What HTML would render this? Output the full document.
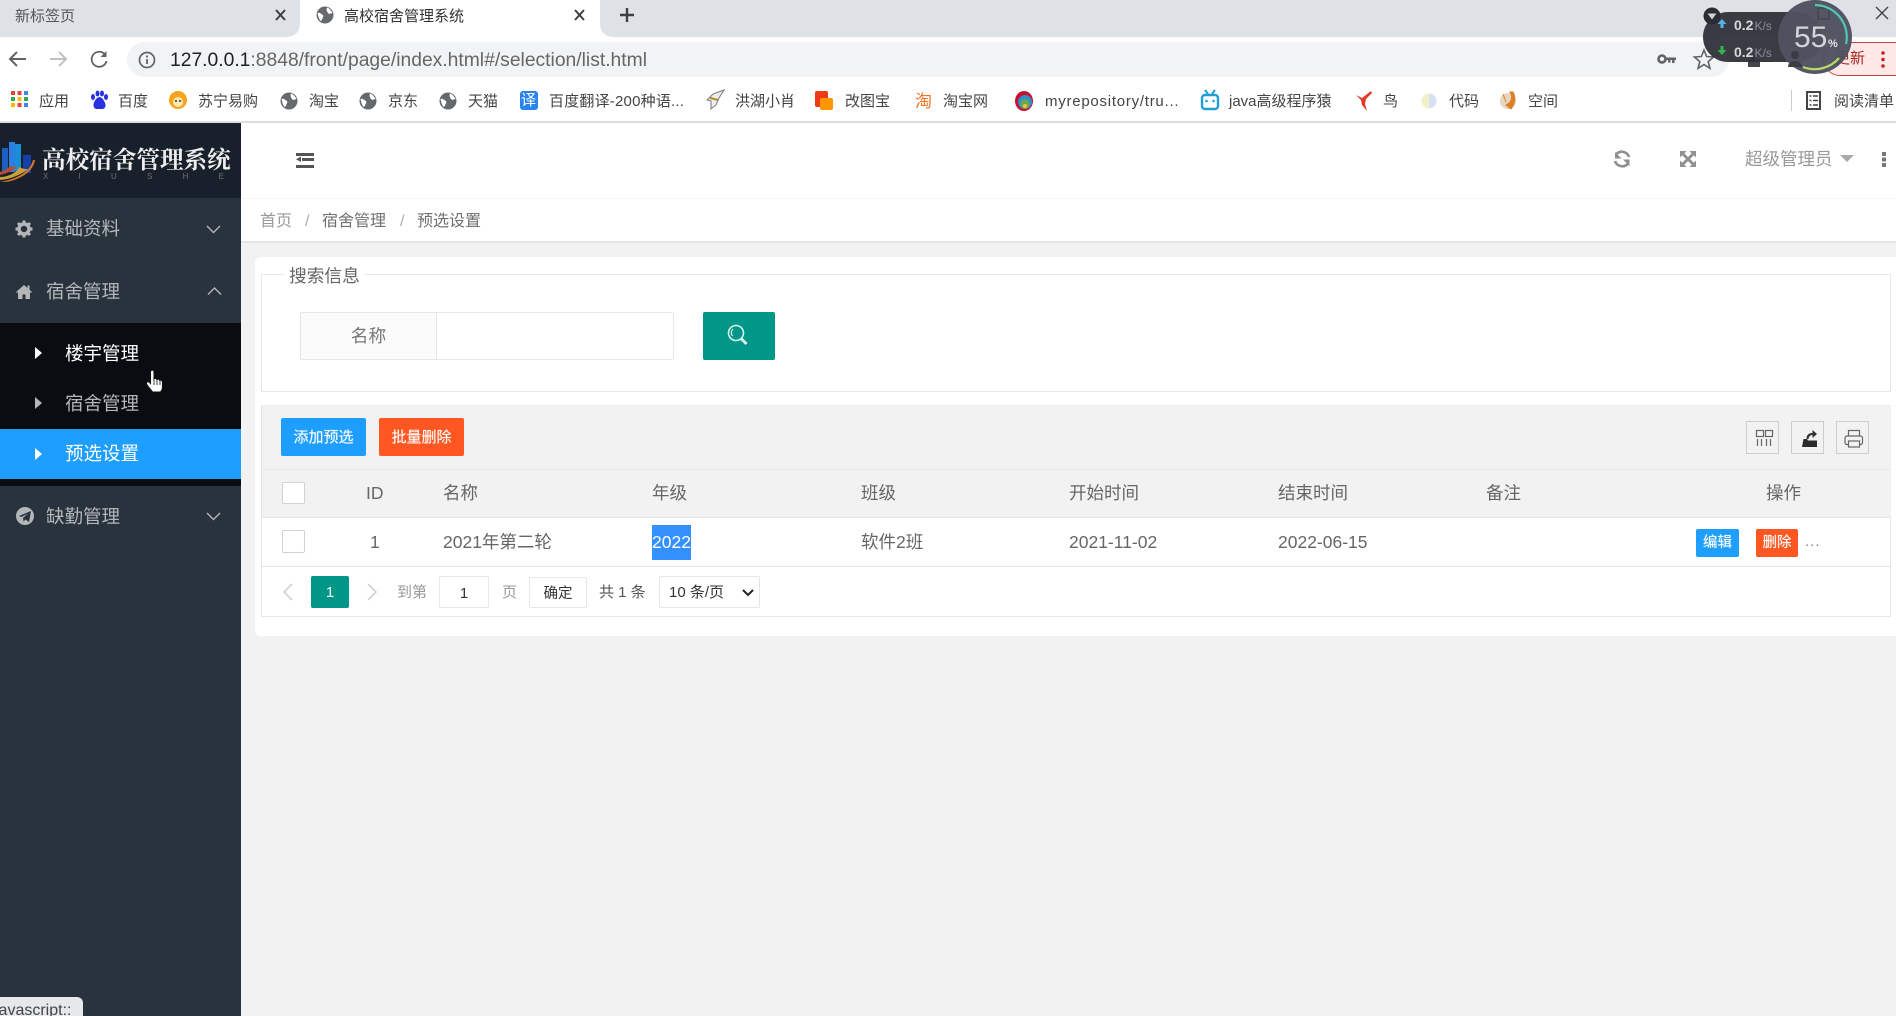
<!DOCTYPE html>
<html lang="zh"><head><meta charset="utf-8"><title>高校宿舍管理系统</title>
<style>
*{box-sizing:border-box}
html,body{margin:0;padding:0;width:1896px;height:1016px;overflow:hidden;background:#f2f2f2;font-family:"Liberation Sans","Noto Sans CJK SC",sans-serif}
.a{position:absolute}
.t{position:absolute;white-space:nowrap;line-height:24px;height:24px}
.bm{font-size:15px;color:#444}
.sb{font-size:18.5px;color:#b4b7ba}
.th{font-size:17.5px;color:#666}
.btn{position:absolute;color:#fff;text-align:center;border-radius:2px;text-shadow:0 0 1px rgba(255,255,255,.55)}
</style></head><body>
<!-- browser chrome -->
<div class="a" style="left:0;top:0;width:1896px;height:37px;background:#dee1e6"></div>
<div class="a" style="left:0;top:37px;width:1896px;height:85px;background:#fff"></div>
<div class="a" style="left:300px;top:0;width:300px;height:37px;background:#fff"></div>
<div class="a" style="left:288px;top:25px;width:12px;height:12px;background:radial-gradient(circle at 0 0,#dee1e6 11.5px,#fff 12px)"></div>
<div class="a" style="left:600px;top:25px;width:12px;height:12px;background:radial-gradient(circle at 100% 0,#dee1e6 11.5px,#fff 12px)"></div>
<div class="t" style="left:15px;top:5px;font-size:15px;color:#555">新标签页</div>
<div class="t" style="left:344px;top:5px;font-size:15px;color:#333">高校宿舍管理系统</div>
<div class="a" style="left:127px;top:42px;width:1602px;height:35px;background:#f1f3f4;border-radius:18px"></div>
<div class="t" style="left:170px;top:49px;font-size:19.3px;color:#666"><span style="color:#202124">127.0.0.1</span>:8848/front/page/index.html#/selection/list.html</div>
<div class="a" style="left:0;top:121px;width:1896px;height:2px;background:#dcdcdc"></div>
<div class="t bm" style="left:39px;top:90px">应用</div>
<div class="t bm" style="left:118px;top:90px">百度</div>
<div class="t bm" style="left:198px;top:90px">苏宁易购</div>
<div class="t bm" style="left:309px;top:90px">淘宝</div>
<div class="t bm" style="left:388px;top:90px">京东</div>
<div class="t bm" style="left:468px;top:90px">天猫</div>
<div class="t bm" style="left:549px;top:90px;letter-spacing:.2px">百度翻译-200种语...</div>
<div class="t bm" style="left:735px;top:90px">洪湖小肖</div>
<div class="t bm" style="left:845px;top:90px">改图宝</div>
<div class="t bm" style="left:943px;top:90px">淘宝网</div>
<div class="t bm" style="left:1045px;top:90px;letter-spacing:.75px">myrepository/tru...</div>
<div class="t bm" style="left:1229px;top:90px">java高级程序猿</div>
<div class="t bm" style="left:1383px;top:90px">鸟</div>
<div class="t bm" style="left:1449px;top:90px">代码</div>
<div class="t bm" style="left:1528px;top:90px">空间</div>
<div class="t bm" style="left:1834px;top:90px">阅读清单</div>
<div class="a" style="left:1791px;top:90px;width:1px;height:21px;background:#ccc"></div>
<div class="t" style="left:915px;top:90px;font-size:17px;color:#f4711f">淘</div>
<div class="a" style="left:520px;top:91px;width:18px;height:19px;background:#2a83ee;border-radius:3px"></div>
<div class="t" style="left:521px;top:89px;font-size:15px;color:#fff">译</div>
<!-- update pill -->
<div class="a" style="left:1823px;top:42px;width:100px;height:34px;background:#fce8e6;border:1.3px solid #c5403a;border-radius:17px"></div>
<div class="t" style="left:1835px;top:47px;font-size:15px;color:#a8261e">更新</div>
<!-- sidebar -->
<div class="a" style="left:0;top:123px;width:241px;height:893px;background:#28333e"></div>
<div class="a" style="left:0;top:123px;width:241px;height:75px;background:#18212b"></div>
<div class="t" style="left:42px;top:144px;font:700 23.6px/28px 'Noto Serif CJK SC','Liberation Serif',serif;color:#eee;height:28px">高校宿舍管理系统</div>
<div class="t" style="left:43px;top:165px;font-size:8px;color:#6a7077;word-spacing:28px">X I U S H E</div>
<div class="t sb" style="left:46px;top:217px">基础资料</div>
<div class="t sb" style="left:46px;top:280px">宿舍管理</div>
<div class="a" style="left:0;top:323px;width:241px;height:163px;background:#090c10"></div>
<div class="t sb" style="left:65px;top:342px;color:#fff">楼宇管理</div>
<div class="t sb" style="left:65px;top:392px">宿舍管理</div>
<div class="a" style="left:0;top:429px;width:241px;height:50px;background:#1e9fff"></div>
<div class="t sb" style="left:65px;top:442px;color:#fff">预选设置</div>
<div class="t sb" style="left:46px;top:505px">缺勤管理</div>
<!-- header -->
<div class="a" style="left:241px;top:123px;width:1655px;height:76px;background:#fff;border-bottom:1px solid #f6f6f6"></div>
<div class="t" style="left:1745px;top:147px;font-size:17.5px;color:#999">超级管理员</div>
<div class="a" style="left:241px;top:199px;width:1655px;height:44px;background:#fff;border-bottom:2px solid #e4e4e4"></div>
<div class="t" style="left:260px;top:210px;font-size:16px;color:#999">首页</div>
<div class="t" style="left:305px;top:210px;font-size:16px;color:#aaa">/</div>
<div class="t" style="left:322px;top:210px;font-size:16px;color:#707070">宿舍管理</div>
<div class="t" style="left:400px;top:210px;font-size:16px;color:#aaa">/</div>
<div class="t" style="left:417px;top:210px;font-size:16px;color:#707070">预选设置</div>
<!-- card -->
<div class="a" style="left:255px;top:257px;width:1660px;height:379px;background:#fff;border-radius:5px"></div>
<div class="a" style="left:261px;top:274px;width:1630px;height:118px;border:1px solid #e6e6e6"></div>
<div class="t" style="left:284px;top:264px;padding:0 5px;font-size:17.7px;color:#666;background:#fff">搜索信息</div>
<div class="a" style="left:300px;top:312px;width:374px;height:48px;border:1px solid #e6e6e6;border-radius:2px"></div>
<div class="a" style="left:300px;top:312px;width:137px;height:48px;border:1px solid #e6e6e6;background:#fbfbfb;border-radius:2px 0 0 2px"></div>
<div class="t" style="left:300px;top:324px;width:137px;text-align:center;font-size:17.7px;color:#777">名称</div>
<div class="a" style="left:703px;top:312px;width:72px;height:48px;background:#009688;border-radius:2px"></div>
<!-- table -->
<div class="a" style="left:261px;top:405px;width:1630px;height:212px;border:1px solid #e6e6e6;border-top-color:#eee"></div>
<div class="a" style="left:262px;top:406px;width:1629px;height:112px;background:#f2f2f2"></div>
<div class="a" style="left:262px;top:469px;width:1629px;height:1px;background:#e8e8e8"></div>
<div class="a" style="left:262px;top:517px;width:1629px;height:1px;background:#e4e4e4"></div>
<div class="a" style="left:262px;top:566px;width:1629px;height:1px;background:#e4e4e4"></div>
<div class="btn" style="left:281px;top:418px;width:85px;height:38px;background:#1e9fff;font-size:15px;line-height:40px">添加预选</div>
<div class="btn" style="left:379px;top:418px;width:85px;height:38px;background:#ff5722;font-size:15px;line-height:40px">批量删除</div>
<div class="a" style="left:1746px;top:421px;width:33px;height:33px;border:1px solid #ccc"></div>
<div class="a" style="left:1791px;top:421px;width:33px;height:33px;border:1px solid #ccc"></div>
<div class="a" style="left:1836px;top:421px;width:33px;height:33px;border:1px solid #ccc"></div>
<div class="a" style="left:282px;top:482px;width:23px;height:22px;background:#fff;border:1px solid #d2d2d2;border-radius:2px"></div>
<div class="a" style="left:282px;top:530px;width:23px;height:23px;background:#fff;border:1px solid #d2d2d2;border-radius:2px"></div>
<div class="t th" style="left:366px;top:481px">ID</div>
<div class="t th" style="left:443px;top:481px">名称</div>
<div class="t th" style="left:652px;top:481px">年级</div>
<div class="t th" style="left:861px;top:481px">班级</div>
<div class="t th" style="left:1069px;top:481px">开始时间</div>
<div class="t th" style="left:1278px;top:481px">结束时间</div>
<div class="t th" style="left:1486px;top:481px">备注</div>
<div class="t th" style="left:1766px;top:481px">操作</div>
<div class="t th" style="left:370px;top:530px">1</div>
<div class="t th" style="left:443px;top:530px">2021年第二轮</div>
<div class="a" style="left:652px;top:525px;width:39px;height:35px;background:#3390ff"></div>
<div class="t th" style="left:652px;top:530px;color:#fff">2022</div>
<div class="t th" style="left:861px;top:530px">软件2班</div>
<div class="t th" style="left:1069px;top:530px">2021-11-02</div>
<div class="t th" style="left:1278px;top:530px">2022-06-15</div>
<div class="btn" style="left:1696px;top:529px;width:43px;height:28px;background:#1e9fff;font-size:14.5px;line-height:29px">编辑</div>
<div class="btn" style="left:1756px;top:529px;width:42px;height:28px;background:#ff5722;font-size:14.5px;line-height:29px">删除</div>
<div class="t" style="left:1805px;top:530px;font-size:15px;color:#888;letter-spacing:1px">...</div>
<!-- pager -->
<div class="btn" style="left:311px;top:576px;width:38px;height:32px;background:#009688;font-size:15px;line-height:34px;text-shadow:none">1</div>
<div class="t" style="left:397px;top:581px;font-size:15px;color:#999">到第</div>
<div class="a" style="left:439px;top:576px;width:50px;height:32px;border:1px solid #e6e6e6;border-radius:2px;background:#fff;text-align:center;font-size:15px;line-height:33px;color:#333">1</div>
<div class="t" style="left:502px;top:581px;font-size:15px;color:#999">页</div>
<div class="a" style="left:529px;top:577px;width:58px;height:31px;border:1px solid #e6e6e6;border-radius:2px;background:#fff;text-align:center;font-size:14.5px;line-height:32px;color:#333">确定</div>
<div class="t" style="left:599px;top:581px;font-size:15px;color:#555">共 1 条</div>
<div class="a" style="left:659px;top:576px;width:101px;height:32px;border:1px solid #e6e6e6;border-radius:2px;background:#fff"></div>
<div class="t" style="left:669px;top:581px;font-size:15px;color:#333">10 条/页</div>
<!-- status bubble -->
<div class="a" style="left:0;top:997px;width:83px;height:19px;background:#e6e8eb;border-top-right-radius:6px;overflow:hidden"><span style="position:absolute;left:-5px;top:3px;font-size:16px;line-height:22px;color:#444;white-space:nowrap">javascript::</span></div>

<svg class="a" style="left:0;top:0" width="1896" height="1016" viewBox="0 0 1896 1016">
<defs>
<g id="globe"><circle r="8.5" fill="#666a6e"/><path d="M-7.5-2C-5-3-4-1-2 0-1 2-3 3-3 5L-4.500 6C-6 4-7 1-7.500-2zM2-7.500C4-7 6-5 7.500-2L4-1C2-3 1-5 2-7.500z" fill="#fff"/></g>
</defs>
<!-- tab controls -->
<path d="M276 10l9 10M285 10l-9 10M575 10l9 10M584 10l-9 10" stroke="#3c4043" stroke-width="2"/>
<path d="M627 8v14M620 15h14" stroke="#3c4043" stroke-width="2.4"/>
<use href="#globe" x="325" y="15"/>
<!-- nav -->
<path d="M26 59H11M17 52l-7 7 7 7" fill="none" stroke="#5f6368" stroke-width="2"/>
<path d="M50 59h15M59 52l7 7-7 7" fill="none" stroke="#bdc1c6" stroke-width="2"/>
<path d="M105 54.500a7.500 7.500 0 1 0 1.500 6.500" fill="none" stroke="#5f6368" stroke-width="1.800"/>
<path d="M106.500 51v6h-6z" fill="#5f6368"/>
<circle cx="147" cy="60" r="7.500" fill="none" stroke="#5f6368" stroke-width="1.700"/>
<path d="M147 59v5M147 55.500v2" stroke="#5f6368" stroke-width="1.800"/>
<!-- omnibox right -->
<circle cx="1662" cy="59" r="3.500" fill="none" stroke="#5f6368" stroke-width="2.600"/>
<path d="M1666 57.500h10v2.500h-1.500v3h-2.500v-3h-1.500v2.500h-2.500v-2.500h-2z" fill="#5f6368"/>
<path d="M1704 50l2.600 6.500 7 .5-5.400 4.500 1.700 6.800-5.900-3.700-5.900 3.700 1.700-6.800-5.400-4.500 7-.5z" fill="none" stroke="#5f6368" stroke-width="1.600"/>
<path d="M1748 60h3v-2a2 2 0 0 1 4 0v2h5v7h-12z" fill="#44464c"/>
<circle cx="1883" cy="53" r="1.800" fill="#c5221f"/><circle cx="1883" cy="59.500" r="1.800" fill="#c5221f"/><circle cx="1883" cy="66" r="1.800" fill="#c5221f"/>
<!-- bookmarks -->
<g>
<rect x="11" y="91" width="4" height="4" fill="#ea4335"/><rect x="17.500" y="91" width="4" height="4" fill="#ea4335"/><rect x="24" y="91" width="4" height="4" fill="#4285f4"/>
<rect x="11" y="97" width="4" height="4" fill="#34a853"/><rect x="17.500" y="97" width="4" height="4" fill="#fbbc05"/><rect x="24" y="97" width="4" height="4" fill="#34a853"/>
<rect x="11" y="103" width="4" height="4" fill="#fbbc05"/><rect x="17.500" y="103" width="4" height="4" fill="#ea4335"/><rect x="24" y="103" width="4" height="4" fill="#4285f4"/>
<g fill="#2932e1"><ellipse cx="93" cy="97" rx="2" ry="3"/><ellipse cx="97.500" cy="93.500" rx="2" ry="3"/><ellipse cx="102" cy="93.500" rx="2" ry="3"/><ellipse cx="106" cy="97" rx="2" ry="3"/><path d="M99.500 97c-3 0-6 5-6 8s2 4 3 4h6c2 0 3-2 3-4s-3-8-6-8z"/></g>
<circle cx="178" cy="100" r="9" fill="#f3a51d"/><circle cx="178" cy="102" r="5" fill="#ffe9b0"/><circle cx="176" cy="101" r="1" fill="#333"/><circle cx="180" cy="101" r="1" fill="#333"/>
<use href="#globe" x="289" y="101"/><use href="#globe" x="368" y="101"/><use href="#globe" x="448" y="101"/>
<path d="M724 90l-11 4-6 6 4 1 0 8 5-4 3-7z" fill="#eee" stroke="#777"/><path d="M710 98l8 2" stroke="#a8922e" stroke-width="2"/>
<rect x="815" y="91" width="13" height="16" rx="2" fill="#f03a17"/><rect x="820" y="98" width="13" height="12" rx="2" fill="#ff9800"/>
<ellipse cx="1024" cy="101" rx="9" ry="10" fill="#c8102e"/><ellipse cx="1025" cy="102" rx="7" ry="7" fill="#2f8fd0"/><ellipse cx="1025" cy="104" rx="4.500" ry="5" fill="#6aa84f"/><circle cx="1025" cy="106" r="2" fill="#f1c232"/>
<rect x="1202" y="95" width="16" height="14" rx="3" fill="#fff" stroke="#1f9fd8" stroke-width="2.400"/><path d="M1205 90l3 4M1215 90l-3 4" stroke="#1f9fd8" stroke-width="2"/><circle cx="1206.500" cy="101" r="1.300" fill="#1f9fd8"/><circle cx="1213.500" cy="101" r="1.300" fill="#1f9fd8"/>
<path d="M1356 95l6 3 9-7 1 2-6 6-1 5 2 7-5-6-1-5z" fill="#e2382b"/>
<circle cx="1429" cy="101" r="7.500" fill="#f3efc8"/><path d="M1429 93.500a7.500 7.500 0 0 1 0 15z" fill="#d6e2f3"/>
<circle cx="1508" cy="101" r="8" fill="#e7d5bf"/><path d="M1510 92c3 5 2 10-4 13l5 4c4-5 5-12 2-17zM1503 94l3 8" fill="#dc7f25" stroke="#dc7f25"/>
<rect x="1807" y="92" width="13" height="17" fill="none" stroke="#444" stroke-width="2"/><path d="M1809.500 96h2M1813 96h5M1809.500 100.500h2M1813 100.500h5M1809.500 105h2M1813 105h5" stroke="#444" stroke-width="1.500"/>
</g>
<!-- logo -->
<g>
<rect x="2" y="148" width="6" height="24" fill="#1e5fc0"/><rect x="9" y="142" width="6" height="30" fill="#2a7fe0"/><rect x="15" y="144" width="6" height="27" fill="#1a8fd8"/><rect x="23" y="155" width="8" height="18" fill="#1540a8"/>
<path d="M35 160c-2 12-14 18-24 21-4 1-8 1-11 1 12-2 30-8 33-22z" fill="#d8772a"/>
<path d="M0 177c8 0 16-4 20-10 2 2 5 2 8 2-6 5-16 10-28 11z" fill="#c9a13a"/>
<path d="M0 172c4-1 7-3 10-6 3 1 6 1 8 0-4 4-10 7-18 9z" fill="#b94b32"/>
</g>
<!-- sidebar icons -->
<g fill="none" stroke="#b4b7ba" stroke-width="1.400">
<path d="M207 226l6.500 6.500 6.500-6.500"/>
<path d="M208 294.500l6.500-6.500 6.500 6.500"/>
<path d="M207 513l6.500 6.500 6.500-6.500"/>
</g>
<circle cx="24" cy="229" r="5" fill="none" stroke="#b4b7ba" stroke-width="3.500"/>
<g stroke="#b4b7ba" stroke-width="3"><path d="M24 220.500v3M24 234.500v3M15.500 229h3M29.500 229h3M18 223l2 2M28 233l2 2M30 223l-2 2M20 233l-2 2"/></g>
<path d="M24 285l-8.500 7.500h2.500v6.500h4.500v-4.500h3v4.500h4.500v-6.500h2.500l-3-2.700v-4.300h-2v2.500z" fill="#b4b7ba"/>
<circle cx="25" cy="516" r="9" fill="#b4b7ba"/><path d="M19 516l12-5-2 11-3.500-2.500-2 2-.5-3.500 5-4.500-6.500 3.500z" fill="#28333e"/>
<path d="M35 347l7 6-7 6z" fill="#fff"/><path d="M35 397l7 6-7 6z" fill="#b4b7ba"/><path d="M35 448l7 6-7 6z" fill="#fff"/>
<!-- hand cursor -->
<path d="M150.500 372c0-2.500 3.500-2.500 3.500 0v7c1-1 2.600-.6 3 .6 1-.9 2.500-.4 2.800.8 1.200-.6 2.700.2 2.700 1.600v5c0 2-1 4-2 5h-8c-1.500-2-5-6-6-8-.8-2 1.600-3 2.800-1.800l1.200 1.300z" fill="#fff" stroke="#111" stroke-width="1.100"/>
<path d="M154 380v5M157 380v5M160 381v4" stroke="#111" stroke-width=".8"/>
<!-- header icons -->
<g fill="#555"><rect x="296" y="153" width="18" height="3"/><rect x="302" y="158" width="12" height="3"/><rect x="296" y="165" width="18" height="3"/><path d="M301 156.500v5.500l-5-2.700z"/></g>
<path d="M1629 157a7.500 7.500 0 0 0-13-2.500M1615 161a7.500 7.500 0 0 0 13 2.500" fill="none" stroke="#8f8f8f" stroke-width="2.600"/>
<path d="M1615 152v6.500h6.500zM1629.500 166v-6.500h-6.500z" fill="#8f8f8f"/>
<path d="M1681 152l14 14M1695 152l-14 14" stroke="#8f8f8f" stroke-width="3"/>
<path d="M1680 151h6.500l-6.500 6.500zM1696 151v6.500l-6.500-6.500zM1680 167v-6.500l6.500 6.500zM1696 167h-6.500l6.500-6.500z" fill="#8f8f8f"/>
<path d="M1840 155h14l-7 7z" fill="#aaa"/>
<g fill="#777"><rect x="1882" y="152" width="4" height="4"/><rect x="1882" y="157.500" width="4" height="4"/><rect x="1882" y="163" width="4" height="4"/></g>
<!-- search -->
<circle cx="736" cy="333" r="7.500" fill="none" stroke="#d9f2ee" stroke-width="1.600"/>
<path d="M733 329a5 5 0 0 0-.5 7" fill="none" stroke="#d9f2ee" stroke-width="1.100"/>
<path d="M741.500 339l5 5" stroke="#d9f2ee" stroke-width="3"/>
<!-- table tools -->
<g fill="none" stroke="#666" stroke-width="1.200"><rect x="1756.500" y="430.500" width="7" height="6"/><rect x="1765.500" y="430.500" width="7" height="6"/><path d="M1757.500 439v7M1761.500 439v7M1766.500 439v7M1770.500 439v7"/></g>
<path d="M1802 447l1.500-8h3.500l1 1.500h9v6.500z" fill="#2b2b2b"/><path d="M1806.500 439c0-4 2-6 6-6v-3l4.500 4-4.500 4v-3c-2.500 0-3.500 1.500-4 4z" fill="#333"/>
<g fill="none" stroke="#666" stroke-width="1.200"><path d="M1848.500 436v-5.500h11v5.500"/><path d="M1848.500 444.500h-1.500a2 2 0 0 1-2-2v-4.500a2 2 0 0 1 2-2h13.500a2 2 0 0 1 2 2v4.500a2 2 0 0 1-2 2h-1.500"/><rect x="1848.500" y="441" width="11" height="6"/></g>
<!-- pager arrows -->
<path d="M292 584l-8 8 8 8" fill="none" stroke="#d2d2d2" stroke-width="1.600"/>
<path d="M368 584l8 8-8 8" fill="none" stroke="#d2d2d2" stroke-width="1.600"/>
<path d="M743 590l5 5 5-5" fill="none" stroke="#222" stroke-width="2"/>
<!-- network widget -->
<rect x="1703" y="12" width="120" height="50" rx="25" fill="#2f3039" opacity=".95"/>
<path d="M1716 37h70" stroke="#3d3e48" stroke-width="1"/>
<circle cx="1712" cy="16" r="8.500" fill="#2b2c33"/><path d="M1707.500 13.500h9l-4.500 6z" fill="#cfd0d4"/>
<path d="M1722 19l4.500 5h-3v4h-3v-4h-3z" fill="#4fb3e8"/>
<path d="M1722 55l4.500-5h-3v-4h-3v4h-3z" fill="#31b44b"/>
<text x="1734" y="30" font-family="Liberation Sans" font-weight="700" font-size="14" fill="#d8d9dd">0.2<tspan font-size="12" font-weight="400" fill="#8c8e98" dx="1">K/s</tspan></text>
<text x="1734" y="57" font-family="Liberation Sans" font-weight="700" font-size="14" fill="#d8d9dd">0.2<tspan font-size="12" font-weight="400" fill="#8c8e98" dx="1">K/s</tspan></text>
<circle cx="1815" cy="37" r="37" fill="#50525f" opacity=".97"/>
<circle cx="1795" cy="55" r="4" fill="#3a3b45"/><path d="M1788 67c0-8 14-8 14 0z" fill="#3a3b45"/>
<rect x="1818" y="8" width="11" height="11" fill="none" stroke="#3b3c45" stroke-width="1"/>
<path d="M1815 5a32 32 0 0 1 31 39" fill="none" stroke="#4fc7b5" stroke-width="2.200"/>
<path d="M1803 67a32 32 0 0 0 36-9" fill="none" stroke="#b9d86a" stroke-width="2.200"/>
<text x="1794" y="47" font-family="Liberation Sans" font-size="30" fill="#d4d5da">55</text>
<text x="1828" y="47" font-family="Liberation Sans" font-weight="700" font-size="11" fill="#e4e5e8">%</text>
<path d="M1876 7l12 12M1888 7l-12 12" stroke="#3c4043" stroke-width="1.300"/>
</svg>
</body></html>
